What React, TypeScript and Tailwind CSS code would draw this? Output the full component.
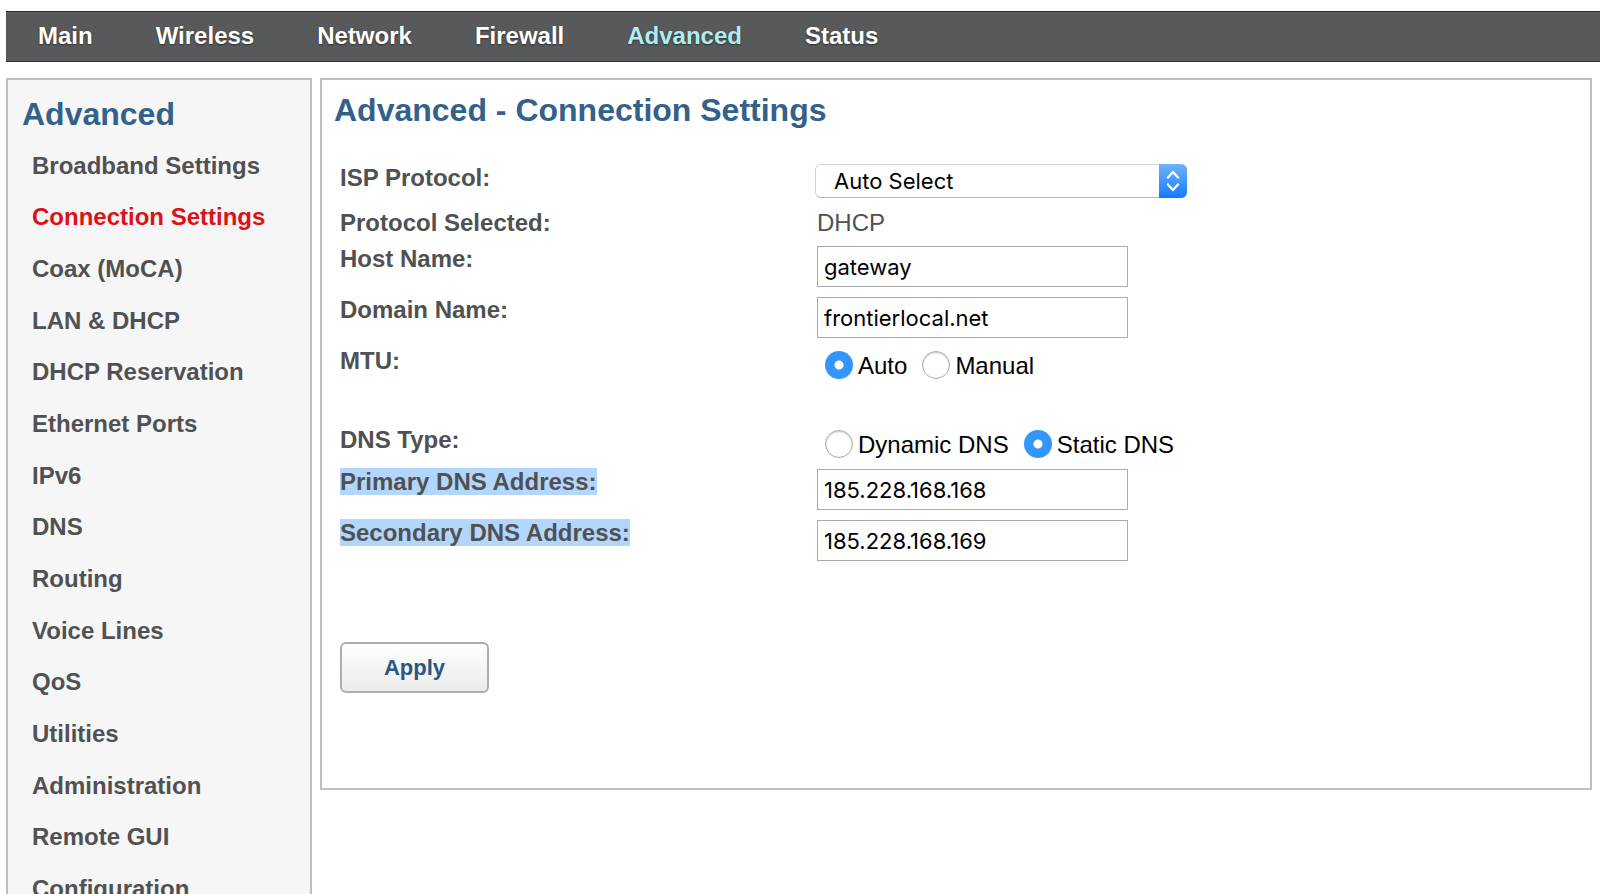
import { useState } from 'react';
import type { ReactNode } from 'react';

const navItems = ['Main', 'Wireless', 'Network', 'Firewall', 'Advanced', 'Status'];

const menuItems = [
  'Broadband Settings',
  'Connection Settings',
  'Coax (MoCA)',
  'LAN & DHCP',
  'DHCP Reservation',
  'Ethernet Ports',
  'IPv6',
  'DNS',
  'Routing',
  'Voice Lines',
  'QoS',
  'Utilities',
  'Administration',
  'Remote GUI',
  'Configuration'
];

const labelClass = 'w-[477px] shrink-0 font-bold leading-[26px] text-[#505152]';
const inputClass = "h-[41px] w-[311px] border border-[#ababab] bg-white px-[6px] pt-px font-['Inter',sans-serif] text-[22px] text-black outline-none";
const radioClass =
  'size-7 shrink-0 appearance-none rounded-full border border-[#a9a9a9] bg-white shadow-[inset_0_1px_2px_rgba(0,0,0,0.2)] checked:border-0 checked:bg-[radial-gradient(circle,#ffffff_4px,#3396fd_5px)] checked:shadow-none';

function TextRow({ id, label, value, onChange, selected }: { id: string; label: string; value: string; onChange: (value: string) => void; selected?: boolean }) {
  return (
    <div className="flex items-start pb-[10px]">
      <label htmlFor={id} className={labelClass}>
        <span className={selected ? 'bg-[#b2d6fe]' : ''}>{label}</span>
      </label>
      <input id={id} type="text" className={inputClass} value={value} onChange={(event) => onChange(event.target.value)} />
    </div>
  );
}

function RadioRow({ label, children }: { label: string; children: ReactNode }) {
  return (
    <div role="radiogroup" aria-label={label} className="flex items-start">
      <span className={labelClass}>{label}</span>
      <div className="flex gap-[15px] pt-[3px] pl-2">{children}</div>
    </div>
  );
}

function Radio({ name, label, checked, onSelect }: { name: string; label: string; checked: boolean; onSelect: () => void }) {
  return (
    <label className="flex items-start gap-[5px] leading-[30px] text-black">
      <input type="radio" name={name} className={radioClass} checked={checked} onChange={onSelect} />
      {label}
    </label>
  );
}

export default function App() {
  const [protocol, setProtocol] = useState('Auto Select');
  const [hostName, setHostName] = useState('gateway');
  const [domainName, setDomainName] = useState('frontierlocal.net');
  const [mtu, setMtu] = useState('Auto');
  const [dnsType, setDnsType] = useState('Static DNS');
  const [primaryDns, setPrimaryDns] = useState('185.228.168.168');
  const [secondaryDns, setSecondaryDns] = useState('185.228.168.169');

  return (
    <div className="h-screen overflow-hidden bg-white pt-[11px] pl-[6px] font-['Liberation_Sans',Arial,sans-serif] text-2xl">
      <nav className="flex gap-[63px] border-y border-[#303133] bg-[#58595b] pt-[10px] pb-[11px] pl-8 leading-7 font-bold">
        {navItems.map((item) => (
          <a key={item} href="#" className={item === 'Advanced' ? 'text-[#afeef0] [text-shadow:0_1px_2px_#303030]' : 'text-white [text-shadow:0_1px_2px_#303030]'}>
            {item}
          </a>
        ))}
      </nav>

      <div className="flex items-start gap-2 pt-4 pr-2">
        <aside className="w-[306px] shrink-0 border-2 border-[#bfbfbf] bg-[#f6f6f6] pt-4 pl-[14px]">
          <h2 className="text-[32px] leading-9 font-bold text-[#336189]">Advanced</h2>
          <ul className="mt-2 grid min-h-[775px] auto-rows-fr items-center pl-[10px] leading-7 font-bold">
            {menuItems.map((item) => (
              <li key={item}>
                <a href="#" className={item === 'Connection Settings' ? 'text-[#dd1216]' : 'text-[#505152]'}>{item}</a>
              </li>
            ))}
          </ul>
        </aside>

        <main className="min-w-0 flex-1 border-2 border-[#bfbfbf] bg-white px-3 pt-3 pb-[95px]">
          <h1 className="text-[32px] leading-9 font-bold text-[#336189]">Advanced - Connection Settings</h1>
          <form className="mt-9 pl-[6px]" onSubmit={(event) => event.preventDefault()}>
            <div className="flex items-start pb-3">
              <label htmlFor="protocol" className={`${labelClass} pt-px`}>ISP Protocol:</label>
              <div className="relative -ml-[2px] w-[372px]">
                <select
                  id="protocol"
                  className="h-[34px] w-full appearance-none rounded-md border border-[#d2d2d2] border-b-[#b8b8b8] bg-white pt-px pl-[18px] font-['Inter',sans-serif] text-[22px] text-black outline-none"
                  value={protocol}
                  onChange={(event) => setProtocol(event.target.value)}
                >
                  <option>Auto Select</option>
                  <option>DHCP</option>
                  <option>PPPoE</option>
                  <option>Static</option>
                </select>
                <span className="pointer-events-none absolute inset-y-0 right-0 flex w-7 items-center justify-center rounded-r-md bg-linear-to-b from-[#6bb3fa] to-[#0a7aff]">
                  <svg viewBox="0 0 14 22" className="h-[22px] w-[14px]" fill="none" stroke="white" strokeWidth="2.4" strokeLinecap="round" strokeLinejoin="round">
                    <path d="M2 7.5 7 2l5 5.500M2 14.500 7 20l5-5.500" />
                  </svg>
                </span>
              </div>
            </div>

            <div className="flex items-start pb-[10px] leading-[26px]">
              <span className={labelClass}>Protocol Selected:</span>
              <span className="text-[#505152]">DHCP</span>
            </div>

            <TextRow id="host" label="Host Name:" value={hostName} onChange={setHostName} />
            <TextRow id="domain" label="Domain Name:" value={domainName} onChange={setDomainName} />

            <div className="pb-[46px]">
              <RadioRow label="MTU:">
                <Radio name="mtu" label="Auto" checked={mtu === 'Auto'} onSelect={() => setMtu('Auto')} />
                <Radio name="mtu" label="Manual" checked={mtu === 'Manual'} onSelect={() => setMtu('Manual')} />
              </RadioRow>
            </div>
            <div className="pb-[9px]">
              <RadioRow label="DNS Type:">
                <Radio name="dns" label="Dynamic DNS" checked={dnsType === 'Dynamic DNS'} onSelect={() => setDnsType('Dynamic DNS')} />
                <Radio name="dns" label="Static DNS" checked={dnsType === 'Static DNS'} onSelect={() => setDnsType('Static DNS')} />
              </RadioRow>
            </div>

            <TextRow id="primary" label="Primary DNS Address:" value={primaryDns} onChange={setPrimaryDns} selected />
            <TextRow id="secondary" label="Secondary DNS Address:" value={secondaryDns} onChange={setSecondaryDns} selected />

            <button type="submit" className="mt-[71px] h-[51px] w-[149px] rounded-md border-2 border-[#adadad] bg-linear-to-b from-white to-[#ebebeb] text-[22px] font-bold text-[#285784]">
              Apply
            </button>
          </form>
        </main>
      </div>
    </div>
  );
}
